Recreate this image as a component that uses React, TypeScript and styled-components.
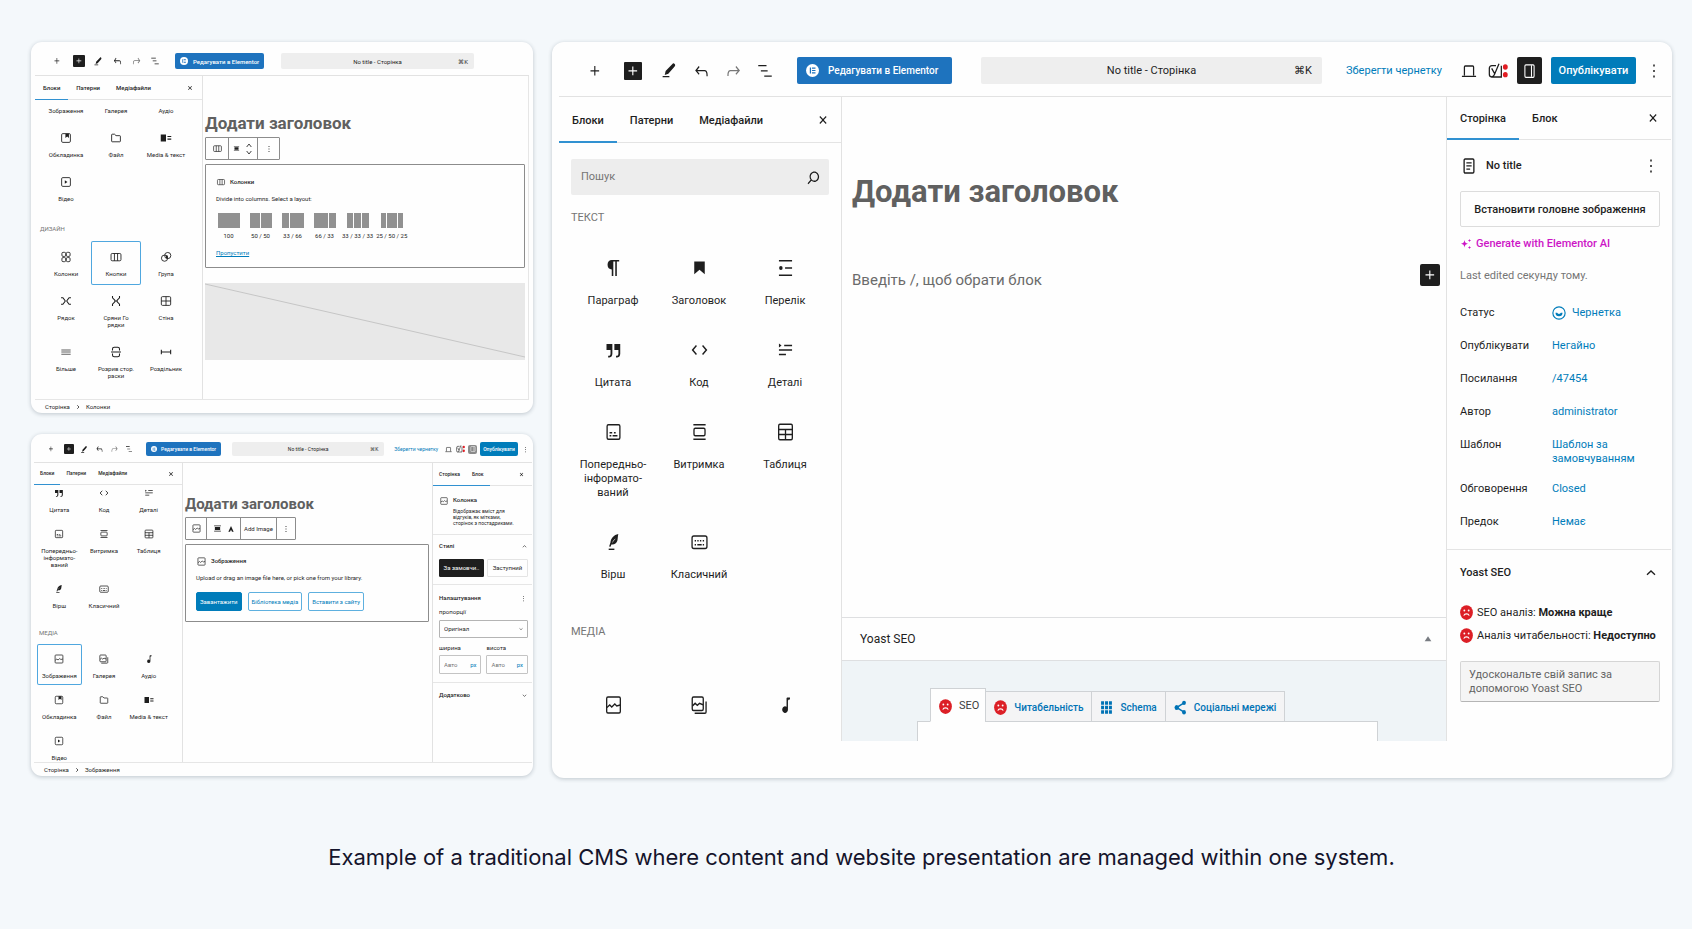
import React from 'react';
import styled, { createGlobalStyle, css, ThemeProvider } from 'styled-components';

/* ---------- sizes of the three editor windows ---------- */

const large = {
  base: 11, chrome: 11, brand: 10, line: 14,
  bar: 55, barTop: 3, barStart: 27, tool: 18, toolGap: 14, darkGap: 6, glyph: 22,
  control: 27, brandStart: 23, brandPad: 9, brandGap: 9, brandWidth: 155, logo: 13,
  titleStart: 29, titleEnd: 24, titlePad: 10,
  frameStart: 7, frameEnd: 1, radius: 12,
  side: 283, tabs: 46, tabPad: 13, tabTop: 3, tabEnd: 9,
  gridStart: 11, gridEnd: 13, icon: 24, itemTop: 12, itemGap: 14, itemEnd: 18,
  heading: 31, headingLine: 38,
};
const medium = {
  ...large,
  base: 6, chrome: 6, brand: 6, line: 7,
  bar: 34, barTop: 5, barStart: 16, tool: 12, toolGap: 7, darkGap: 3, glyph: 14,
  control: 16, brandStart: 14, brandPad: 5, brandGap: 5, brandWidth: 89, logo: 8,
  titleStart: 17, titleEnd: 55, titlePad: 6,
  frameStart: 4, frameEnd: 4, radius: 11,
  side: 168, tabs: 24, tabPad: 8, tabTop: 0, tabEnd: 7,
  gridStart: 6, gridEnd: 11, icon: 14, itemTop: 9, itemGap: 6, itemEnd: 8,
  heading: 17, headingLine: 20,
};
const small = {
  ...medium,
  chrome: 5, brand: 5,
  bar: 29, barTop: 2, barStart: 12, tool: 10, toolGap: 5, darkGap: 3, glyph: 12,
  control: 14, brandStart: 12, brandPad: 5, brandGap: 4, brandWidth: 75, logo: 6,
  titleStart: 11, titleEnd: 10,
  frameStart: 3, frameEnd: 1,
  side: 149, tabs: 22, tabPad: 6, tabEnd: 6,
  gridStart: 3, gridEnd: 11, icon: 12, itemTop: 9, itemGap: 7, itemEnd: 6,
  heading: 15, headingLine: 18,
};
type Metrics = typeof large;
type T = { theme: any };
const px = (key: keyof Metrics) => (p: T) => `${p.theme[key]}px`;

/* ---------- icons ---------- */

const S = { fill: 'none', stroke: 'currentColor', strokeWidth: 1.5 } as const;
const glyphs: Record<string, React.ReactNode> = {
  plus: <path d="M11 12.5V17.5H12.5V12.5H17.5V11H12.5V6H11V11H6V12.5H11Z" />,
  pencil: <><path d="M17.2 3c1.100-.6 3.600 1.200 3 2.700l-.7 1.300-8.400 9-4.800 1.700 1.200-5.200 9.700-9.500z" /><path d="M3.500 18.800h9v1.600h-9z" /></>,
  undo: <path d="M18.3 11.7c-.6-.6-1.4-.9-2.3-.9H6.7l2.9-3.3-1.1-1-4.5 5L8.5 16l1-1-2.7-2.7H16c.5 0 .9.2 1.3.5 1 1 1 3.4 1 4.500v.3h1.500v-.2c0-1.500 0-4.300-1.500-5.700z" />,
  redo: <path d="M15.6 6.5l-1.1 1 2.9 3.3H8c-.9 0-1.700.3-2.300.9-1.400 1.500-1.400 4.200-1.400 5.600v.2h1.500v-.3c0-1.100 0-3.500 1-4.500.3-.3.7-.5 1.300-.5h9.200L14.500 15l1.100 1.100 4.600-4.600-4.600-5z" opacity=".6" />,
  list: <path d="M3 4h11v1.800H3V4Zm3.500 7h9v1.800h-9V11ZM21 18H11v1.800h10V18Z" />,
  close: <path d="M12 13.060l3.712 3.713 1.061-1.060L13.061 12l3.712-3.712-1.060-1.060L12 10.938 8.288 7.227l-1.061 1.060L10.939 12l-3.712 3.712 1.060 1.061L12 13.061z" />,
  search: <path d="M13 5c-3.300 0-6 2.700-6 6 0 1.400.5 2.700 1.300 3.700l-3.800 3.800 1.100 1.100 3.800-3.800c1 .8 2.300 1.300 3.700 1.300 3.300 0 6-2.700 6-6S16.300 5 13 5zm0 10.500c-2.500 0-4.500-2-4.500-4.500s2-4.500 4.500-4.500 4.500 2 4.500 4.500-2 4.500-4.500 4.500z" />,
  dots: <path d="M11 5h2v2h-2zM11 11h2v2h-2zM11 17h2v2h-2z" />,
  laptop: <path d="M6.500 17V7.500c0-.6.4-1 1-1h9c.6 0 1 .4 1 1V17M3.500 17.800h17" {...S} />,
  sidebar: <><rect x="5.500" y="4.500" width="13" height="15" rx="1.500" {...S} /><path d="M14.800 5v14" {...S} /></>,
  chevronUp: <path d="M6 14.500l6-5.500 6 5.500" {...S} strokeWidth={2} />,
  chevronDown: <path d="M6 9.500l6 5.500 6-5.500" {...S} strokeWidth={2} />,
  chevronRight: <path d="M9 5l7 7-7 7" {...S} strokeWidth={3} />,
  mover: <path d="M5 8l7-6 7 6M5 16l7 6 7-6" {...S} strokeWidth={2} />,
  paragraph: <path d="M10 13.500v-.1V20h1.800V5.600h2.200V20h1.800V5.600H18.500V4H10c-2.760 0-4.800 2-4.800 4.800s2 4.700 4.800 4.700z" />,
  heading: <path d="M6 5.500V18.300L12 13.700L18 18.300V5.500H6Z" />,
  bullets: <><path d="M4.500 4h15v1.500h-15zM4.500 18.500h15V20h-15zM11.500 11.200h8v1.600h-8z" /><circle cx="6.700" cy="12" r="2" /></>,
  quote: <path d="M13 6v6h4.600v3.600c0 .8-.2 1.400-.5 1.700-.6.6-1.300.6-2.200.5v1.700h.5c1 0 2.300-.1 3.300-1 .6-.6 1-1.600 1-2.800V6H13zm-9 6h4.600v3.600c0 .8-.2 1.400-.5 1.700-.6.6-1.300.6-2.200.5v1.700h.5c1 0 2.300-.1 3.300-1 .6-.6 1-1.600 1-2.800V6H4v6z" />,
  code: <path d="M8.500 7.500L4.200 12l4.300 4.500M15.500 7.500l4.300 4.500-4.300 4.500" {...S} strokeWidth={1.7} />,
  details: <path d="M4.500 5.500l3 2-3 2zM10.500 6.700h9v1.500h-9zM4.500 11.200h15v1.500h-15zM4.500 15.700h8v1.500h-8z" />,
  preformatted: <><rect x="4.700" y="4.700" width="14.600" height="14.600" rx="1.500" {...S} /><path d="M7.500 12h3v1.400h-3zM12.500 12h2v1.400h-2zM7.500 15h2v1.400h-2zM11 15h5.500v1.400H11z" /></>,
  pullquote: <><path d="M5 4h14v1.500H5zM5 18.500h14V20H5z" /><rect x="5.700" y="8.200" width="12.600" height="7.600" rx="1.500" {...S} /></>,
  table: <><rect x="4.200" y="4.200" width="15.600" height="15.600" rx="1.500" {...S} /><path d="M4 9.400h16M4 14.600h16M12 9.400v10.200" {...S} /></>,
  verse: <><path d="M17.500 4c-5 .8-8.600 4.200-9 8.600l-1.500 4 1.600.2 1-2.300c3 .5 6-1 6.800-3.700.6-2 .4-4.500 1.100-6.800zM14.800 8.500c-1.700 1.200-3.400 3-4.300 5 .3-2.300 1.800-4.200 4.300-5z" /><path d="M6.500 18.600h6.500V20H6.500z" /></>,
  classic: <><rect x="3.500" y="6" width="17" height="12.500" rx="2" {...S} /><path d="M6.500 10h1.500v1.400H6.500zM9.500 10h1.500v1.400H9.500zM12.500 10H14v1.400h-1.500zM15.700 10h1.500v1.400h-1.500zM6.500 14H8v1.400H6.500zM9.500 14h5v1.400h-5zM15.700 14h1.500v1.400h-1.500z" /></>,
  image: <><rect x="4.200" y="4" width="15.600" height="16" rx="1.500" {...S} /><path d="M4.500 14.500l3.200-2.500 2.300 2 3.500-3 2.200 2 4-1" {...S} /></>,
  gallery: <><rect x="3.700" y="4" width="12.600" height="13.500" rx="1.500" {...S} /><path d="M4 12.800l3-2.500 2.500 2 2.500-2 4 1.500M19.500 8.500V19c0 .8-.5 1.300-1.300 1.300H6.500" {...S} /></>,
  audio: <path d="M13.200 4.500v9.300a3.300 3.300 0 1 0 1.600 2.700V8.200c0-1 .6-1.700 1.700-1.700h.6V4.600h-2.400c-.9 0-1.500.4-1.500.9z" />,
  cover: <><rect x="4.500" y="4.500" width="15" height="15" rx="2" {...S} /><path d="M11 4.500h6v7.500l-3-2.500-3 2.500z" /></>,
  file: <path d="M4.500 17.500V6.500c0-.6.4-1 1-1h4l2.500 2.500h6.500c.6 0 1 .4 1 1v8.500c0 .6-.4 1-1 1h-13c-.6 0-1-.4-1-1z" {...S} />,
  mediaText: <path d="M3 6h9v12H3zM14.500 8.500h6.500v1.800h-6.500zM14.500 13h6.500v1.800h-6.500z" />,
  video: <><rect x="4.500" y="4.500" width="15" height="15" rx="2" {...S} /><path d="M10 9l4.500 3-4.500 3z" /></>,
  columns: <><rect x="3.500" y="6" width="17" height="12.500" rx="2" {...S} /><path d="M9.300 6v12.500M14.700 6v12.500" {...S} /></>,
  buttons: <><rect x="5" y="4" width="6.500" height="7" rx="2" {...S} /><rect x="12.500" y="4" width="6.500" height="7" rx="2" {...S} /><rect x="5" y="13" width="6.500" height="7" rx="2" {...S} /><rect x="12.500" y="13" width="6.500" height="7" rx="2" {...S} /></>,
  group: <><circle cx="9.500" cy="14" r="5.300" {...S} /><circle cx="15" cy="9.500" r="5.300" {...S} /><path d="M12 9.500h3V14h-3z" /></>,
  row: <path d="M3.500 6.500h3.200l3.800 4.800v1.400l-3.800 4.800H3.500M20.500 6.500h-3.200l-3.800 4.800v1.400l3.800 4.800h3.200" {...S} strokeWidth={1.8} />,
  stack: <path d="M6 3.500v3l4 4v3l-4 4v3M18 3.500v3l-4 4v3l4 4v3M10 12h4" {...S} strokeWidth={1.8} />,
  grid: <><rect x="4" y="4.500" width="16" height="15" rx="2" {...S} /><path d="M12 4.500v15M4 12h16" {...S} /></>,
  more: <path d="M4 7.500h16v1.800H4zM4 11.200h16V13H4zM4 15h16v1.800H4z" opacity=".7" />,
  pageBreak: <path d="M6 9.500V7c0-1.700 1.300-3 3-3h6c1.700 0 3 1.300 3 3v2.500M3.500 12h17M6 14.500V17c0 1.700 1.300 3 3 3h6c1.700 0 3-1.300 3-3v-2.500" {...S} strokeWidth={1.8} />,
  separator: <path d="M4 8v8M20 8v8M4 12h16" {...S} strokeWidth={1.8} />,
  align: <path d="M3 4h18v2H3zM5 8h14v8H5zM3 18h18v2H3z" />,
  duotone: <path d="M12 3l8 17h-5l-3-6-3 6H4z" />,
  page: <><rect x="5.500" y="3.500" width="13" height="17" rx="1.500" {...S} strokeWidth={1.8} /><path d="M8.500 7.500h7V9h-7zM8.500 11.200h7v1.500h-7zM8.500 15h5v1.500h-5z" /></>,
  sparkle: <path d="M9 4c.8 5 2.400 6.700 7 7.500-4.600.8-6.200 2.500-7 7.500-.8-5-2.400-6.700-7-7.500 4.600-.8 6.200-2.500 7-7.500zM19 1.500c.4 2.300 1.200 3.100 3.500 3.500-2.300.4-3.100 1.200-3.500 3.500-.4-2.300-1.200-3.100-3.500-3.500 2.300-.4 3.100-1.200 3.500-3.500zM19 15.500c.4 2.300 1.200 3.100 3.500 3.500-2.300.4-3.100 1.200-3.500 3.500-.4-2.300-1.200-3.100-3.500-3.500 2.300-.4 3.100-1.200 3.500-3.500z" />,
  draft: <><circle cx="12" cy="12" r="10.500" {...S} strokeWidth={2} /><path d="M6 11.500h2.800c.6 1.300 1.700 2 3.200 2s2.600-.7 3.200-2H18a6 6 0 0 1-12 0z" /></>,
  schema: <path d="M2 2h5.500v5.500H2zM9.300 2h5.500v5.500H9.300zM16.500 2H22v5.500h-5.500zM2 9.300h5.500v5.500H2zM9.300 9.300h5.500v5.500H9.300zM16.500 9.300H22v5.500h-5.500zM2 16.500h5.500V22H2zM9.300 16.500h5.500V22H9.300zM16.500 16.500H22V22h-5.500z" />,
  share: <><circle cx="5" cy="12" r="4" /><circle cx="18.500" cy="4.500" r="3.500" /><circle cx="18.500" cy="19.500" r="3.500" /><path d="M18.500 4.500L5 12l13.500 7.500" {...S} strokeWidth={2.5} /></>,
  triangle: <path d="M12 4l10 15H2z" />,
  elementor: <><circle cx="12" cy="12" r="12" fill="#fff" /><path d="M7 6.500h2.300v11H7zM11 6.500h6.500v2.200H11zM11 10.900h6.500v2.200H11zM11 15.300h6.500v2.200H11z" fill="#1e73be" /></>,
  face: <><ellipse cx="12" cy="12" rx="11.800" ry="11.800" fill="#dc1f26" /><circle cx="8" cy="8.700" r="1.700" fill="#fff" /><circle cx="16" cy="8.700" r="1.700" fill="#fff" /><path d="M7 17c1.500-4 8.500-4 10 0" fill="none" stroke="#fff" strokeWidth="2" /></>,
};

const Svg = styled.svg<{ $w: number; $h: number }>`
  display: block;
  flex: none;
  width: ${p => p.$w}px;
  height: ${p => p.$h}px;
  fill: currentColor;
`;
const Icon = ({ name, w, h }: { name: string; w: number; h?: number }) => (
  <Svg $w={w} $h={h ?? w} viewBox="0 0 24 24" preserveAspectRatio="none" aria-hidden="true">{glyphs[name]}</Svg>
);
const YoastMark = ({ w, h }: { w: number; h: number }) => (
  <Svg $w={w} $h={h} viewBox="0 0 30 24" preserveAspectRatio="none" aria-hidden="true">
    <path d="M12 4H6C3.500 4 2 5.500 2 8v9c0 2.500 1 4 3.500 4H20V4M5.500 8l4.500 8M16.500 1L9.500 17.500c-.8 2-2 3-4 3" fill="none" stroke="currentColor" strokeWidth="1.900" />
    <ellipse cx="26" cy="6" rx="3.600" ry="4" fill="#e11d24" />
    <ellipse cx="26" cy="17.500" rx="3.600" ry="4" fill="#e11d24" />
  </Svg>
);

/* ---------- page ---------- */

const Global = createGlobalStyle`
  *, *::before, *::after { box-sizing: border-box; }
  body {
    margin: 0;
    background: #f4f8fb;
    color: #1e1e1e;
    font-family: Roboto, "Liberation Sans", sans-serif;
  }
  button, input, select { font: inherit; color: inherit; margin: 0; }
  button { padding: 0; border: 0; background: none; cursor: pointer; }
  h1, h2, h3, p, ul, dl, dd, figure { margin: 0; padding: 0; font-weight: inherit; font-size: inherit; }
  ul { list-style: none; }
  a { color: #007cba; text-decoration: none; }
`;
const Page = styled.figure`
  min-height: 100vh;
  padding: 42px 20px 57px 31px;
`;
const Windows = styled.div`
  display: grid;
  grid-template-columns: minmax(0, 502fr) minmax(0, 1120fr);
  gap: 19px;
  align-items: start;
`;
const Stack = styled.div`
  display: flex;
  flex-direction: column;
  gap: 21px;
`;
const Caption = styled.figcaption`
  margin-top: 63px;
  padding-left: 20px;
  color: #14142b;
  font: 400 22px/32px Inter, sans-serif;
  text-align: center;
`;

/* ---------- editor window ---------- */

const Window = styled.section<{ $tail?: boolean }>`
  padding: 0 ${px('frameEnd')} ${p => (p.$tail ? 37 : 0)}px ${px('frameStart')};
  border-radius: ${px('radius')};
  background: #fefefe;
  box-shadow: 0 1px 4px rgba(20, 40, 60, 0.24);
  overflow: hidden;
  font-size: ${px('base')};
  line-height: ${px('line')};
`;
const Toolbar = styled.header`
  display: flex;
  align-items: center;
  height: ${px('bar')};
  padding-top: ${px('barTop')};
  padding-left: ${px('barStart')};
  border-bottom: 1px solid #e2e2e2;
  font-size: ${px('chrome')};
`;
const Tools = styled.div`
  display: flex;
  align-items: center;
  gap: ${px('toolGap')};
`;
const Tool = styled.button<{ $dark?: boolean }>`
  display: flex;
  align-items: center;
  justify-content: center;
  flex: none;
  width: ${px('tool')};
  height: ${px('tool')};
  border-radius: 1px;
  ${p => p.$dark && css`
    margin: 0 ${(q: T) => (q.theme.base > 6 ? 4 : 0)}px 0 ${px('darkGap')};
    background: #1e1e1e;
    color: #fff;
  `}
`;
const Brand = styled.button`
  display: flex;
  align-items: center;
  flex: none;
  gap: ${px('brandGap')};
  width: ${px('brandWidth')};
  height: ${px('control')};
  margin-left: ${px('brandStart')};
  padding-left: ${px('brandPad')};
  border-radius: 2px;
  background: #1e73be;
  color: #fff;
  font-size: ${px('brand')};
  font-weight: 500;
  white-space: nowrap;
`;
const DocTitle = styled.button`
  display: grid;
  grid-template-columns: 1fr auto 1fr;
  align-items: center;
  flex: 1;
  height: ${px('control')};
  margin: 0 ${px('titleEnd')} 0 ${px('titleStart')};
  padding: 0 ${px('titlePad')};
  border-radius: 2px;
  background: #eeeeee;
  white-space: nowrap;
  span { grid-column: 2; }
  kbd { font: inherit; text-align: right; }
`;
const Actions = styled.div<{ $compact?: boolean }>`
  display: flex;
  align-items: center;
  flex: none;
  gap: ${p => (p.$compact ? 3 : 9)}px;
  padding-right: ${p => (p.$compact ? 2 : 8)}px;
`;
const SaveDraft = styled.button`
  margin-right: ${p => (p.theme.base > 6 ? 8 : 3)}px;
  color: #007cba;
  white-space: nowrap;
`;
const IconButton = styled.button`
  display: flex;
  align-items: center;
  justify-content: center;
  flex: none;
`;
const PanelToggle = styled.button<{ $compact?: boolean }>`
  display: flex;
  align-items: center;
  justify-content: center;
  width: ${p => (p.$compact ? 9 : 25)}px;
  height: ${p => (p.$compact ? 9 : 27)}px;
  border-radius: 2px;
  background: ${p => (p.$compact ? '#8a8a8a' : '#1e1e1e')};
  color: #fff;
`;
const Publish = styled.button`
  width: ${p => (p.theme.base > 6 ? 85 : 38)}px;
  height: ${px('control')};
  border-radius: 2px;
  background: #007cba;
  color: #fff;
  font-weight: 500;
`;
const Body = styled.div<{ $inspector?: number; $edge?: boolean }>`
  display: grid;
  grid-template-columns: ${px('side')} minmax(0, 1fr) ${p => (p.$inspector ? `${p.$inspector}px` : '')};
  ${p => p.$edge && css`border-right: 1px solid #e6e6e6;`}
`;
const Footer = styled.footer`
  display: flex;
  align-items: center;
  gap: 5px;
  height: 14px;
  padding-left: 10px;
  border-top: 1px solid #e6e6e6;
`;

/* ---------- tab bars ---------- */

const TabBar = styled.div<{ $height?: number }>`
  display: flex;
  align-items: stretch;
  height: ${p => p.$height ?? p.theme.tabs}px;
  padding-right: ${px('tabEnd')};
  border-bottom: 1px solid #e4e4e4;
  font-size: ${px('chrome')};
  ${IconButton} { margin-left: auto; }
`;
const Tab = styled.button<{ $active?: boolean }>`
  padding: ${px('tabTop')} ${px('tabPad')} 0;
  margin-bottom: -1px;
  border-bottom: ${p => (p.theme.base > 6 ? 2 : 1)}px solid ${p => (p.$active ? '#3191d1' : 'transparent')};
  font-weight: 500;
`;

/* ---------- block inserter ---------- */

const Inserter = styled.aside`
  border-right: 1px solid #e2e2e2;
  overflow: hidden;
`;
const SearchBox = styled.label`
  display: flex;
  align-items: center;
  height: 36px;
  margin: 16px 12px 0 12px;
  padding: 0 6px 0 10px;
  border-radius: 2px;
  background: #ededed;
  input {
    flex: 1;
    min-width: 0;
    padding: 0;
    border: 0;
    outline: 0;
    background: none;
  }
  input::placeholder { color: #757575; opacity: 1; }
`;
const GroupTitle = styled.h2<{ $above: number; $below: number }>`
  margin: ${p => p.$above}px 0 ${p => p.$below}px;
  padding-left: ${p => (p.theme.base > 6 ? 12 : 5)}px;
  color: #757575;
  text-transform: uppercase;
`;
const BlockGrid = styled.ul<{ $end?: number; $first?: number }>`
  display: grid;
  grid-template-columns: repeat(3, minmax(0, 1fr));
  padding: 0 ${px('gridEnd')} 0 ${px('gridStart')};
  margin-bottom: ${p => p.$end ?? 0}px;
  ${p => p.$first !== undefined && css`
    li:nth-child(-n + 3) button { padding-top: ${p.$first}px; }
  `}
`;
const BlockButton = styled.button<{ $selected?: boolean }>`
  display: flex;
  flex-direction: column;
  align-items: center;
  gap: ${px('itemGap')};
  width: 100%;
  height: 100%;
  padding: ${px('itemTop')} 0 ${px('itemEnd')};
  border-radius: 2px;
  box-shadow: ${p => (p.$selected ? 'inset 0 0 0 1px #4fa7df' : 'none')};
  white-space: pre;
  text-align: center;
`;

/* ---------- canvas ---------- */

const Canvas = styled.main<{ $top: number; $side: number }>`
  display: flex;
  flex-direction: column;
  align-items: flex-start;
  padding: ${p => p.$top}px 3px 0 ${p => p.$side}px;
`;
const PageHeading = styled.h1`
  color: #606060;
  font-size: ${px('heading')};
  font-weight: 700;
  line-height: ${px('headingLine')};
`;
const BlockToolbar = styled.div`
  display: flex;
  height: 23px;
  margin: 4px 0;
  border: 1px solid #8c8c8c;
  border-radius: 1px;
  > * + * { border-left: 1px solid #8c8c8c; }
`;
const ToolCell = styled.button<{ $width: number }>`
  display: flex;
  align-items: center;
  justify-content: center;
  gap: 5px;
  width: ${p => p.$width}px;
  white-space: nowrap;
`;
const BlockCard = styled.section<{ $top: number; $bottom: number }>`
  align-self: stretch;
  padding: ${p => p.$top}px 10px ${p => p.$bottom}px;
  border: 1px solid #8c8c8c;
  border-radius: 1px;
  line-height: 8px;
`;
const CardTitle = styled.h2`
  display: flex;
  align-items: center;
  gap: 4px;
  height: 8px;
  font-weight: 500;
`;
const CardText = styled.p`
  margin-top: 9px;
`;
const Layouts = styled.div`
  display: flex;
  gap: 3px;
  margin: 10px 0 9px -2px;
`;
const LayoutChoice = styled.button`
  display: flex;
  flex-direction: column;
  align-items: center;
  gap: 4px;
  min-width: 29px;
  line-height: 8px;
  white-space: nowrap;
`;
const Swatch = styled.span<{ $cols: string }>`
  display: grid;
  grid-template-columns: ${p => p.$cols};
  gap: 1px;
  width: 22px;
  height: 15px;
  i { background: #919191; }
`;
const SkipLink = styled.a`
  display: block;
  text-decoration: underline;
`;
const Placeholder = styled.div`
  align-self: stretch;
  height: 77px;
  margin-top: 15px;
  background: #e8e8e8;
  svg { display: block; width: 100%; height: 100%; }
`;
const ButtonRow = styled.div`
  display: flex;
  gap: 6px;
  margin-top: 10px;
`;
const CardButton = styled.button<{ $primary?: boolean }>`
  height: 19px;
  padding: 0 3px;
  border: 1px solid ${p => (p.$primary ? '#007cba' : '#5eb0df')};
  border-radius: 2px;
  background: ${p => (p.$primary ? '#007cba' : '#fff')};
  color: ${p => (p.$primary ? '#fff' : '#007cba')};
  white-space: nowrap;
`;

/* ---------- large window: canvas and metabox ---------- */

const Writing = styled.main`
  display: flex;
  flex-direction: column;
`;
const WritingArea = styled.div`
  flex: 1;
  padding: 76px 6px 0 10px;
`;
const Prompt = styled.div`
  display: flex;
  align-items: flex-start;
  justify-content: space-between;
  margin-top: 53px;
  color: #6b6b6b;
  font-size: 15px;
  line-height: 22px;
  p { padding-top: 5px; }
`;
const AddBlock = styled.button`
  display: flex;
  align-items: center;
  justify-content: center;
  width: 20px;
  height: 22px;
  border-radius: 2px;
  background: #1e1e1e;
  color: #fff;
`;
const MetaHeader = styled.button`
  display: flex;
  align-items: center;
  justify-content: space-between;
  height: 44px;
  padding: 0 14px 0 18px;
  border: solid #dedfe1;
  border-width: 1px 0;
  font-size: 12px;
  svg { color: #787c82; }
`;
const MetaArea = styled.div`
  height: 80px;
  padding: 27px 68px 0 75px;
  background: #eff4f7;
`;
const MetaTabs = styled.div`
  display: flex;
  align-items: flex-end;
  padding-left: 13px;
`;
const MetaTab = styled.button<{ $active?: boolean }>`
  display: flex;
  align-items: center;
  gap: 7px;
  height: ${p => (p.$active ? 34 : 31)}px;
  margin: 0 0 -1px ${p => (p.$active ? 0 : -1)}px;
  padding: 2px 8px 0;
  border: 1px solid #cfd2d5;
  border-bottom-color: ${p => (p.$active ? '#fefefe' : '#cfd2d5')};
  background: ${p => (p.$active ? '#fefefe' : '#f4f4f5')};
  color: ${p => (p.$active ? '#404040' : '#0073b5')};
  font-size: ${p => (p.$active ? 11 : 10)}px;
  font-weight: ${p => (p.$active ? 400 : 500)};
  white-space: nowrap;
  &:first-child { padding-right: 6px; }
`;
const MetaPanel = styled.div`
  height: 20px;
  border: solid #cfd2d5;
  border-width: 1px 1px 0;
  background: #fefefe;
`;

/* ---------- large window: inspector ---------- */

const Inspector = styled.aside`
  border-left: 1px solid #e2e2e2;
`;
const Summary = styled.div`
  padding: 0 11px 1px 13px;
  border-bottom: 1px solid #e4e4e4;
`;
const DocRow = styled.div`
  display: flex;
  align-items: center;
  gap: 8px;
  height: 51px;
  span { flex: 1; font-weight: 500; }
`;
const FeaturedImage = styled.button`
  display: block;
  width: 100%;
  height: 36px;
  padding-top: 2px;
  border: 1px solid #dcdcdc;
  border-radius: 2px;
  font-weight: 500;
  white-space: nowrap;
`;
const Generate = styled.button`
  display: flex;
  align-items: center;
  gap: 4px;
  margin: 10px 0 18px;
  color: #cc15c6;
  font-weight: 500;
`;
const Edited = styled.p`
  margin-bottom: 23px;
  color: #757575;
`;
const Field = styled.div`
  display: grid;
  grid-template-columns: 92px 1fr;
  align-items: start;
  min-height: 33px;
  padding-bottom: 16px;
  button {
    display: flex;
    align-items: center;
    gap: 6px;
    color: #007cba;
    line-height: 14px;
    text-align: left;
    white-space: pre;
  }
`;
const SeoHead = styled.button`
  display: flex;
  align-items: center;
  justify-content: space-between;
  width: 100%;
  height: 46px;
  padding: 0 12px 0 13px;
  font-weight: 500;
`;
const SeoBody = styled.div`
  padding: 9px 11px 0 13px;
`;
const Score = styled.p`
  display: flex;
  align-items: center;
  gap: 4px;
  height: 15px;
  margin-bottom: 8px;
  white-space: nowrap;
  b { font-weight: 700; }
`;
const Improve = styled.button`
  display: block;
  width: 100%;
  height: 41px;
  margin-top: 18px;
  padding: 0 8px;
  border: 1px solid #d5d5d5;
  border-bottom-color: #b5b5b5;
  border-radius: 2px;
  background: #f5f5f5;
  color: #646464;
  text-align: left;
`;

/* ---------- small window: inspector ---------- */

const Section = styled.section<{ $top: number; $bottom: number }>`
  padding: ${p => p.$top}px 4px ${p => p.$bottom}px 6px;
  line-height: 8px;
  & + & { border-top: 1px solid #e6e6e6; }
`;
const SectionHead = styled.h3`
  display: flex;
  align-items: center;
  justify-content: space-between;
  height: 8px;
  font-weight: 500;
`;
const BlockInfo = styled.div`
  display: flex;
  gap: 4px;
  h3 { font-weight: 500; }
  p { margin-top: 4px; font-size: 5px; line-height: 6px; white-space: pre; }
`;
const StyleChoices = styled.div`
  display: grid;
  grid-template-columns: 45fr 41fr;
  gap: 3px;
  margin-top: 9px;
`;
const StyleChoice = styled.button<{ $on?: boolean }>`
  height: 18px;
  border: 1px solid ${p => (p.$on ? '#1e1e1e' : '#e4e4e4')};
  border-radius: 1px;
  background: ${p => (p.$on ? '#1e1e1e' : 'none')};
  color: ${p => (p.$on ? '#fff' : 'inherit')};
`;
const Labelled = styled.label`
  display: block;
  margin-top: 6px;
`;
const SelectBox = styled.span`
  display: grid;
  grid-template-columns: 1fr 6px;
  align-items: center;
  height: 18px;
  margin-top: 4px;
  padding: 0 3px 0 4px;
  border: 1px solid #b4b4b4;
  border-radius: 1px;
  select {
    appearance: none;
    padding: 0;
    border: 0;
    outline: 0;
    background: none;
  }
`;
const Sizes = styled.div`
  display: grid;
  grid-template-columns: minmax(0, 43fr) minmax(0, 42fr);
  gap: 5px;
`;
const SizeBox = styled.span`
  display: flex;
  align-items: center;
  height: 19px;
  margin-top: 3px;
  padding: 0 4px;
  border: 1px solid #c4c4c4;
  border-radius: 1px;
  color: #007cba;
  input {
    flex: 1;
    min-width: 0;
    padding: 0;
    border: 0;
    outline: 0;
    background: none;
  }
  input::placeholder { color: #757575; opacity: 1; }
`;

/* ---------- shared parts ---------- */

type Block = [icon: string, label?: string, selected?: boolean];

const Blocks = ({ items, m, end, first }: { items: Block[]; m: Metrics; end?: number; first?: number }) => (
  <BlockGrid $end={end} $first={first}>
    {items.map(([icon, label, selected], i) => (
      <li key={i}>
        <BlockButton $selected={selected} aria-label={label ? undefined : icon}>
          {icon && <Icon name={icon} w={m === large ? 21 : m.icon} h={m.icon} />}
          {label && <span>{label}</span>}
        </BlockButton>
      </li>
    ))}
  </BlockGrid>
);

const TopBar = ({ m, children }: { m: Metrics; children?: React.ReactNode }) => (
  <Toolbar>
    <Tools>
      <Tool aria-label="Меню"><Icon name="plus" w={m.glyph - 4} h={m.glyph - 2} /></Tool>
      <Tool $dark aria-label="Додати блок"><Icon name="plus" w={m.glyph - 4} /></Tool>
      <Tool aria-label="Інструменти"><Icon name="pencil" w={m.glyph - 4} h={m.glyph - 3} /></Tool>
      <Tool aria-label="Скасувати"><Icon name="undo" w={m.glyph - 3} h={m.glyph} /></Tool>
      <Tool aria-label="Повторити"><Icon name="redo" w={m.glyph - 3} h={m.glyph} /></Tool>
      <Tool aria-label="Огляд документа"><Icon name="list" w={m.glyph - 4} /></Tool>
    </Tools>
    <Brand><Icon name="elementor" w={m.logo} />Редагувати в Elementor</Brand>
    <DocTitle><span>No title - Сторінка</span><kbd>⌘K</kbd></DocTitle>
    {children}
  </Toolbar>
);

const InserterTabs = ({ m }: { m: Metrics }) => (
  <TabBar role="tablist">
    <Tab role="tab" $active>Блоки</Tab>
    <Tab role="tab">Патерни</Tab>
    <Tab role="tab">Медіафайли</Tab>
    <IconButton aria-label="Закрити"><Icon name="close" w={m === large ? 18 : 10} h={m === large ? 20 : 10} /></IconButton>
  </TabBar>
);

const Crumbs = ({ leaf }: { leaf: string }) => (
  <Footer>Сторінка<Icon name="chevronRight" w={6} />{leaf}</Footer>
);

/* ---------- windows ---------- */

const layouts: [string, string][] = [
  ['100', '1fr'], ['50 / 50', '1fr 1fr'], ['33 / 66', '1fr 2fr'],
  ['66 / 33', '2fr 1fr'], ['33 / 33 / 33', '1fr 1fr 1fr'], ['25 / 50 / 25', '1fr 2fr 1fr'],
];

const ColumnsWindow = () => (
  <ThemeProvider theme={medium}>
    <Window>
      <TopBar m={medium} />
      <Body $edge>
        <Inserter>
          <InserterTabs m={medium} />
          <Blocks m={medium} first={7} items={[['', 'Зображення'], ['', 'Галерея'], ['', 'Аудіо']]} />
          <Blocks m={medium} items={[
            ['cover', 'Обкладинка'], ['file', 'Файл'], ['mediaText', 'Media & текст'], ['video', 'Відео'],
          ]} />
          <GroupTitle $above={15} $below={9}>Дизайн</GroupTitle>
          <Blocks m={medium} end={12} items={[
            ['buttons', 'Колонки'], ['columns', 'Кнопки', true], ['group', 'Група'],
            ['row', 'Рядок'], ['stack', 'Сряни Го\nрядки'], ['grid', 'Стіна'],
            ['more', 'Більше'], ['pageBreak', 'Розрив стор.\nраски'], ['separator', 'Роздільник'],
          ]} />
        </Inserter>
        <Canvas $top={37} $side={2}>
          <PageHeading>Додати заголовок</PageHeading>
          <BlockToolbar>
            <ToolCell $width={22} aria-label="Колонки"><Icon name="columns" w={11} /></ToolCell>
            <ToolCell $width={29} aria-label="Вирівнювання"><Icon name="align" w={7} /><Icon name="mover" w={8} h={12} /></ToolCell>
            <ToolCell $width={22} aria-label="Параметри"><Icon name="dots" w={10} /></ToolCell>
          </BlockToolbar>
          <BlockCard $top={13} $bottom={10}>
            <CardTitle><Icon name="columns" w={10} />Колонки</CardTitle>
            <CardText>Divide into columns. Select a layout:</CardText>
            <Layouts>
              {layouts.map(([label, cols]) => (
                <LayoutChoice key={label}>
                  <Swatch $cols={cols}>{cols.split(' ').map((_, i) => <i key={i} />)}</Swatch>
                  {label}
                </LayoutChoice>
              ))}
            </Layouts>
            <SkipLink href="#skip">Пропустити</SkipLink>
          </BlockCard>
          <Placeholder>
            <svg viewBox="0 0 320 77" preserveAspectRatio="none" aria-hidden="true">
              <path d="M0 1L320 74" stroke="#c6c6c6" strokeWidth="1" />
            </svg>
          </Placeholder>
        </Canvas>
      </Body>
      <Crumbs leaf="Колонки" />
    </Window>
  </ThemeProvider>
);

const ImageWindow = () => (
  <ThemeProvider theme={small}>
    <Window>
      <TopBar m={small}>
        <Actions $compact>
          <SaveDraft>Зберегти чернетку</SaveDraft>
          <IconButton aria-label="Перегляд"><Icon name="laptop" w={9} /></IconButton>
          <IconButton aria-label="Yoast SEO"><YoastMark w={9} h={8} /></IconButton>
          <PanelToggle $compact aria-label="Налаштування"><Icon name="sidebar" w={8} /></PanelToggle>
          <Publish>Опублікувати</Publish>
          <IconButton aria-label="Параметри"><Icon name="dots" w={9} /></IconButton>
        </Actions>
      </TopBar>
      <Body $inspector={100}>
        <Inserter>
          <InserterTabs m={small} />
          <Blocks m={small} first={2} items={[
            ['quote', 'Цитата'], ['code', 'Код'], ['details', 'Деталі'],
            ['preformatted', 'Попередньо-\nінформато-\nваний'], ['pullquote', 'Витримка'], ['table', 'Таблиця'],
            ['verse', 'Вірш'], ['classic', 'Класичний'],
          ]} />
          <GroupTitle $above={14} $below={8}>Медіа</GroupTitle>
          <Blocks m={small} end={-5} items={[
            ['image', 'Зображення', true], ['gallery', 'Галерея'], ['audio', 'Аудіо'],
            ['cover', 'Обкладинка'], ['file', 'Файл'], ['mediaText', 'Media & текст'], ['video', 'Відео'],
          ]} />
        </Inserter>
        <Canvas $top={32} $side={2}>
          <PageHeading>Додати заголовок</PageHeading>
          <BlockToolbar>
            <ToolCell $width={20} aria-label="Зображення"><Icon name="image" w={11} /></ToolCell>
            <ToolCell $width={34} aria-label="Вирівнювання"><Icon name="align" w={9} /><Icon name="duotone" w={8} /></ToolCell>
            <ToolCell $width={36}>Add Image</ToolCell>
            <ToolCell $width={19} aria-label="Параметри"><Icon name="dots" w={10} /></ToolCell>
          </BlockToolbar>
          <BlockCard $top={12} $bottom={10}>
            <CardTitle><Icon name="image" w={11} />Зображення</CardTitle>
            <CardText>Upload or drag an image file here, or pick one from your library.</CardText>
            <ButtonRow>
              <CardButton $primary>Завантажити</CardButton>
              <CardButton>Бібліотека медіа</CardButton>
              <CardButton>Вставити з сайту</CardButton>
            </ButtonRow>
          </BlockCard>
        </Canvas>
        <Inspector>
          <TabBar role="tablist" $height={23}>
            <Tab role="tab" $active>Сторінка</Tab>
            <Tab role="tab" $active>Блок</Tab>
            <IconButton aria-label="Закрити"><Icon name="close" w={9} /></IconButton>
          </TabBar>
          <Section $top={10} $bottom={8}>
            <BlockInfo>
              <Icon name="image" w={10} />
              <div>
                <h3>Колонка</h3>
                <p>{'Відображає вміст для\nвідгуків, як мітками,\nсторінок з постадриками.'}</p>
              </div>
            </BlockInfo>
          </Section>
          <Section $top={7} $bottom={7}>
            <SectionHead>Стилі<Icon name="chevronUp" w={7} /></SectionHead>
            <StyleChoices>
              <StyleChoice $on>За замовчи..</StyleChoice>
              <StyleChoice>Заступний</StyleChoice>
            </StyleChoices>
          </Section>
          <Section $top={9} $bottom={8}>
            <SectionHead>Налаштування<Icon name="dots" w={9} /></SectionHead>
            <Labelled>
              пропорції
              <SelectBox>
                <select defaultValue="o"><option value="o">Оригінал</option></select>
                <Icon name="chevronDown" w={6} />
              </SelectBox>
            </Labelled>
            <Sizes>
              <Labelled>ширина<SizeBox><input placeholder="Авто" />px</SizeBox></Labelled>
              <Labelled>висота<SizeBox><input placeholder="Авто" />px</SizeBox></Labelled>
            </Sizes>
          </Section>
          <Section $top={8} $bottom={0}>
            <SectionHead>Додатково<Icon name="chevronDown" w={7} /></SectionHead>
          </Section>
        </Inspector>
      </Body>
      <Crumbs leaf="Зображення" />
    </Window>
  </ThemeProvider>
);

const fields: [string, string, boolean?][] = [
  ['Статус', 'Чернетка', true], ['Опублікувати', 'Негайно'], ['Посилання', '/47454'],
  ['Автор', 'administrator'], ['Шаблон', 'Шаблон за\nзамовчуванням'],
  ['Обговорення', 'Closed'], ['Предок', 'Немає'],
];

const EditorWindow = () => (
  <ThemeProvider theme={large}>
    <Window $tail>
      <TopBar m={large}>
        <Actions>
          <SaveDraft>Зберегти чернетку</SaveDraft>
          <IconButton aria-label="Перегляд"><Icon name="laptop" w={20} h={22} /></IconButton>
          <IconButton aria-label="Yoast SEO"><YoastMark w={20} h={16} /></IconButton>
          <PanelToggle aria-label="Налаштування"><Icon name="sidebar" w={17} h={20} /></PanelToggle>
          <Publish>Опублікувати</Publish>
          <IconButton aria-label="Параметри"><Icon name="dots" w={18} h={22} /></IconButton>
        </Actions>
      </TopBar>
      <Body $inspector={225}>
        <Inserter>
          <InserterTabs m={large} />
          <SearchBox>
            <input type="search" placeholder="Пошук" aria-label="Пошук" />
            <Icon name="search" w={19} h={21} />
          </SearchBox>
          <GroupTitle $above={16} $below={19}>Текст</GroupTitle>
          <Blocks m={large} items={[
            ['paragraph', 'Параграф'], ['heading', 'Заголовок'], ['bullets', 'Перелік'],
            ['quote', 'Цитата'], ['code', 'Код'], ['details', 'Деталі'],
            ['preformatted', 'Попередньо-\nінформато-\nваний'], ['pullquote', 'Витримка'], ['table', 'Таблиця'],
            ['verse', 'Вірш'], ['classic', 'Класичний'],
          ]} />
          <GroupTitle $above={25} $below={42}>Медіа</GroupTitle>
          <Blocks m={large} end={6} items={[['image'], ['gallery'], ['audio']]} />
        </Inserter>
        <Writing>
          <WritingArea>
            <PageHeading>Додати заголовок</PageHeading>
            <Prompt>
              <p>Введіть /, щоб обрати блок</p>
              <AddBlock aria-label="Додати блок"><Icon name="plus" w={18} /></AddBlock>
            </Prompt>
          </WritingArea>
          <MetaHeader>Yoast SEO<Icon name="triangle" w={8} /></MetaHeader>
          <MetaArea>
            <MetaTabs role="tablist">
              <MetaTab role="tab" $active><Icon name="face" w={13} h={15} />SEO</MetaTab>
              <MetaTab role="tab"><Icon name="face" w={13} h={15} />Читабельність</MetaTab>
              <MetaTab role="tab"><Icon name="schema" w={13} h={15} />Schema</MetaTab>
              <MetaTab role="tab"><Icon name="share" w={13} h={15} />Соціальні мережі</MetaTab>
            </MetaTabs>
            <MetaPanel />
          </MetaArea>
        </Writing>
        <Inspector>
          <TabBar role="tablist" $height={43}>
            <Tab role="tab" $active>Сторінка</Tab>
            <Tab role="tab">Блок</Tab>
            <IconButton aria-label="Закрити"><Icon name="close" w={18} h={20} /></IconButton>
          </TabBar>
          <Summary>
            <DocRow>
              <Icon name="page" w={18} h={20} />
              <span>No title</span>
              <IconButton aria-label="Дії"><Icon name="dots" w={18} h={22} /></IconButton>
            </DocRow>
            <FeaturedImage>Встановити головне зображення</FeaturedImage>
            <Generate><Icon name="sparkle" w={12} />Generate with Elementor AI</Generate>
            <Edited>Last edited секунду тому.</Edited>
            <dl>
              {fields.map(([name, value, draft]) => (
                <Field key={name}>
                  <dt>{name}</dt>
                  <dd><button>{draft && <Icon name="draft" w={14} />}{value}</button></dd>
                </Field>
              ))}
            </dl>
          </Summary>
          <SeoHead>Yoast SEO<Icon name="chevronUp" w={16} /></SeoHead>
          <SeoBody>
            <Score><Icon name="face" w={13} h={15} /><span>SEO аналіз: <b>Можна краще</b></span></Score>
            <Score><Icon name="face" w={13} h={15} /><span>Аналіз читабельності: <b>Недоступно</b></span></Score>
            <Improve>Удоскональте свій запис за допомогою Yoast SEO</Improve>
          </SeoBody>
        </Inspector>
      </Body>
    </Window>
  </ThemeProvider>
);

export default function App() {
  return (
    <>
      <Global />
      <Page>
        <Windows>
          <Stack>
            <ColumnsWindow />
            <ImageWindow />
          </Stack>
          <EditorWindow />
        </Windows>
        <Caption>
          Example of a traditional CMS where content and website presentation are managed within one system.
        </Caption>
      </Page>
    </>
  );
}
